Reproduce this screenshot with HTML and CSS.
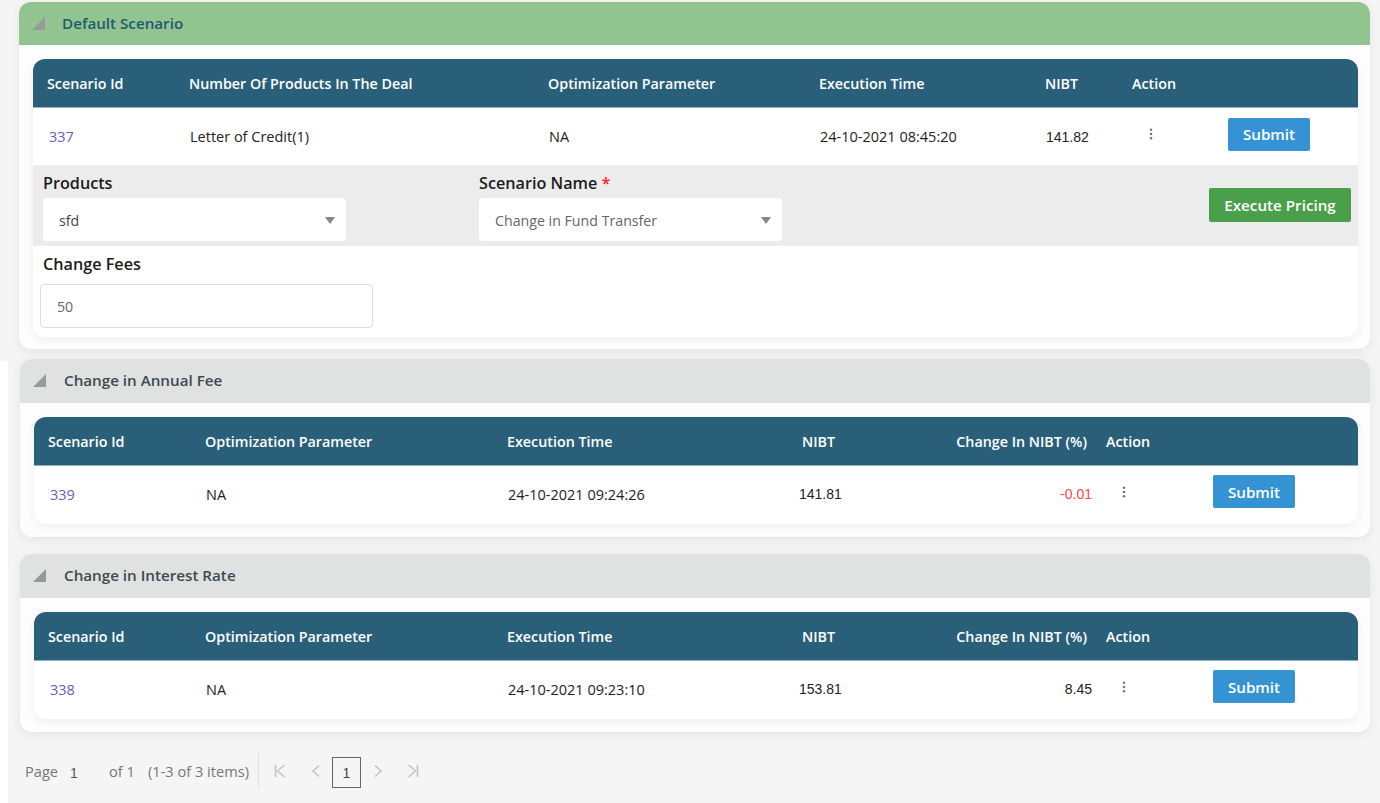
FILE: index.html
```html
<!DOCTYPE html>
<html lang="en">
<head>
<meta charset="utf-8">
<title>Scenarios</title>
<link rel="stylesheet" href="styles.css">
</head>
<body>
<main class="page">
  <section class="panel panel-first">
    <header class="panel-head head-green">
      <svg class="corner" viewBox="0 0 12 12"><polygon points="12,0 12,12 0,12"/></svg>
      <h2>Default Scenario</h2>
    </header>
    <div class="card">
      <div class="row thead cols-deal">
        <span>Scenario Id</span><span>Number Of Products In The Deal</span><span>Optimization Parameter</span><span>Execution Time</span><span>NIBT</span><span>Action</span>
      </div>
      <div class="row tbody body-deal cols-deal">
        <a class="id" href="#">337</a><span>Letter of Credit(1)</span><span>NA</span><span>24-10-2021 08:45:20</span><span class="num">141.82</span>
        <span class="actions act-deal">
          <svg class="dots" viewBox="0 0 4 14"><circle cx="2" cy="2" r="1.5"/><circle cx="2" cy="7" r="1.5"/><circle cx="2" cy="12" r="1.5"/></svg>
          <button class="btn btn-blue">Submit</button>
        </span>
      </div>
      <div class="band">
        <div class="field">
          <label>Products</label>
          <div class="select"><span class="val-dark">sfd</span><i class="caret"></i></div>
        </div>
        <div class="field">
          <label>Scenario Name <b class="req">*</b></label>
          <div class="select"><span>Change in Fund Transfer</span><i class="caret"></i></div>
        </div>
        <button class="btn btn-green">Execute Pricing</button>
      </div>
      <div class="fees">
        <label>Change Fees</label>
        <div class="input">50</div>
      </div>
    </div>
  </section>

  <section class="panel panel-second">
    <header class="panel-head head-gray">
      <svg class="corner" viewBox="0 0 12 12"><polygon points="12,0 12,12 0,12"/></svg>
      <h2>Change in Annual Fee</h2>
    </header>
    <div class="card">
      <div class="row thead cols-scn">
        <span>Scenario Id</span><span>Optimization Parameter</span><span>Execution Time</span><span>NIBT</span><span class="right">Change In NIBT (%)</span><span class="th-action">Action</span>
      </div>
      <div class="row tbody body-scn cols-scn">
        <a class="id" href="#">339</a><span>NA</span><span>24-10-2021 09:24:26</span><span class="num nudge">141.81</span><span class="num right over neg">-0.01</span>
        <span class="actions act-scn">
          <svg class="dots" viewBox="0 0 4 14"><circle cx="2" cy="2" r="1.5"/><circle cx="2" cy="7" r="1.5"/><circle cx="2" cy="12" r="1.5"/></svg>
          <button class="btn btn-blue">Submit</button>
        </span>
      </div>
    </div>
  </section>

  <section class="panel panel-third">
    <header class="panel-head head-gray">
      <svg class="corner" viewBox="0 0 12 12"><polygon points="12,0 12,12 0,12"/></svg>
      <h2>Change in Interest Rate</h2>
    </header>
    <div class="card">
      <div class="row thead cols-scn">
        <span>Scenario Id</span><span>Optimization Parameter</span><span>Execution Time</span><span>NIBT</span><span class="right">Change In NIBT (%)</span><span class="th-action">Action</span>
      </div>
      <div class="row tbody body-scn cols-scn">
        <a class="id" href="#">338</a><span>NA</span><span>24-10-2021 09:23:10</span><span class="num nudge">153.81</span><span class="num right over">8.45</span>
        <span class="actions act-scn">
          <svg class="dots" viewBox="0 0 4 14"><circle cx="2" cy="2" r="1.5"/><circle cx="2" cy="7" r="1.5"/><circle cx="2" cy="12" r="1.5"/></svg>
          <button class="btn btn-blue">Submit</button>
        </span>
      </div>
    </div>
  </section>

  <nav class="pager">
    <span class="p-page">Page</span>
    <span class="p-cur">1</span>
    <span class="p-of">of 1</span>
    <span class="p-items">(1-3 of 3 items)</span>
    <span class="p-div"></span>
    <svg class="p-ico p-first" viewBox="0 0 12 14"><path d="M1.5 1v12M10.5 1 3.5 7l7 6"/></svg>
    <svg class="p-ico p-prev" viewBox="0 0 12 14"><path d="M9 1.5 3 7l6 5.5"/></svg>
    <span class="p-box">1</span>
    <svg class="p-ico p-next" viewBox="0 0 12 14"><path d="M3 1.5 9 7l-6 5.5"/></svg>
    <svg class="p-ico p-last" viewBox="0 0 12 14"><path d="M10.5 1v12M1.5 1l7 6-7 6"/></svg>
  </nav>
</main>
</body>
</html>
```
FILE: styles.css
```css
* { box-sizing: border-box; }
html, body { margin: 0; height: 100%; background: #fff; }
body { overflow: hidden; font-family: "Open Sans", "Noto Sans", "Liberation Sans", sans-serif; font-size: 14px; color: #222; }

.page { position: relative; width: 1380px; height: 803px; background: #f5f5f5; padding-top: 2px; overflow: hidden; }
.page::before { content: ""; position: absolute; z-index: 1; left: 0; top: 361px; bottom: 0; width: 8px; background: #fff; }

.panel { width: 1350px; margin-left: 20px; background: #fdfdfd; border-radius: 12px; box-shadow: 0 3px 12px rgba(0,0,0,.07); padding-bottom: 13px; }
.panel-first { width: 1351px; margin-left: 19px; padding-bottom: 12px; }
.panel-second { margin-top: 10px; }
.panel-third { margin-top: 17px; }

.panel-head { height: 44px; display: flex; align-items: center; padding: 0 0 2px 13px; border-radius: 12px 12px 0 0; margin-bottom: 14px; }
.panel-head h2 { margin: 0 0 0 18px; font-size: 15.2px; font-weight: 600; color: #3d4a50; }
.head-green { background: #91c48f; height: 43px; padding-bottom: 1px; }
.head-green h2 { color: #1f5a72; margin-left: 17px; }
.head-gray { background: #e0e1e1; }
.corner { width: 13px; height: 13px; fill: #999; }

.card { margin: 0 12px 0 14px; background: #fff; border-radius: 12px; box-shadow: 0 3px 10px rgba(0,0,0,.06); overflow: hidden; }
.row { display: grid; align-items: center; padding-left: 14px; }
.cols-deal { grid-template-columns: 142px 359px 271px 226px 87px 1fr; }
.cols-scn { grid-template-columns: 157px 302px 295px 150px 135px 1fr; }
.thead { height: 49px; background: #2a5f7a; border-bottom: 1px solid #8fb0c0; color: #fff; font-weight: 600; font-size: 14.3px; }
.tbody { height: 58px; font-size: 14.5px; color: #222; }
.body-deal { height: 57px; }
.body-scn { padding-bottom: 2px; }
.tbody > * { padding-left: 1px; }
.tbody .id { padding-left: 2px; }
.id { color: #5f63b8; text-decoration: none; }
.num { font-family: "Liberation Sans", Arial, sans-serif; font-size: 14px; }
.nudge { margin-left: -4px; }
.right { text-align: right; }
.over { margin-right: -5px; }
.neg { color: #f44; }
.th-action { padding-left: 19px; }

.actions { display: flex; align-items: center; }
.dots { width: 4px; height: 12px; fill: #777; margin-top: -6px; }
.act-scn .dots { margin-top: -4px; }
.tbody .act-deal { padding-left: 17px; }
.act-deal .btn { margin-left: 75px; margin-top: -5px; }
.tbody .act-scn { padding-left: 35px; }
.act-scn .btn { margin-left: 87px; margin-top: -5px; }

.btn { border: 0; border-radius: 2px; color: #fff; font-family: inherit; font-weight: 600; font-size: 15.2px; height: 33px; padding: 0; }
.btn-blue { width: 82px; background: #3593d3; }
.btn-green { width: 142px; height: 34px; background: #4aa04a; margin: 16px 7px 0 auto; }

.band { height: 81px; background: #ececec; display: flex; padding: 6px 0 0 10px; border-top: 1px solid #f1f1f1; }
.field { width: 303px; margin-right: 133px; }
label { display: block; font-size: 16.2px; font-weight: 600; color: #1c1c1c; line-height: 22px; }
.req { color: #f22; font-weight: 600; }
.select { height: 43px; margin-top: 4px; padding: 2px 11px 0 16px; background: #fff; border-radius: 4px; display: flex; align-items: center; justify-content: space-between; font-size: 14.2px; color: #666; }
.val-dark { color: #444; }
.caret { width: 0; height: 0; border-left: 5px solid transparent; border-right: 5px solid transparent; border-top: 7px solid #888; }

.fees { height: 91px; padding: 7px 0 0 10px; }
.input { width: 333px; height: 44px; margin: 9px 0 0 -3px; border: 1px solid #ddd; border-radius: 4px; background: #fff; padding-left: 16px; display: flex; align-items: center; font-size: 14.2px; color: #666; }

.pager { display: flex; align-items: center; height: 71px; padding-left: 25px; padding-top: 7px; font-size: 14.6px; color: #777; }
.p-page { width: 45px; }
.p-cur { width: 39px; font-family: "Liberation Sans", Arial, sans-serif; font-size: 14px; color: #555; padding-top: 4px; }
.p-of { width: 39px; }
.p-items { width: 110px; }
.p-div { width: 1px; height: 36px; background: #e2e2e2; }
.p-ico { width: 12px; height: 14px; fill: none; stroke: #c4c4c4; stroke-width: 1.6; }
.p-first { margin-left: 15px; }
.p-prev { margin-left: 24px; }
.p-box { width: 29px; height: 31px; margin: 2px 0 0 10px; border: 1px solid #666; display: flex; align-items: center; justify-content: center; font-family: "Liberation Sans", Arial, sans-serif; font-size: 14px; color: #444; padding-top: 2px; }
.p-next { margin-left: 11px; }
.p-last { margin-left: 23px; }
```
